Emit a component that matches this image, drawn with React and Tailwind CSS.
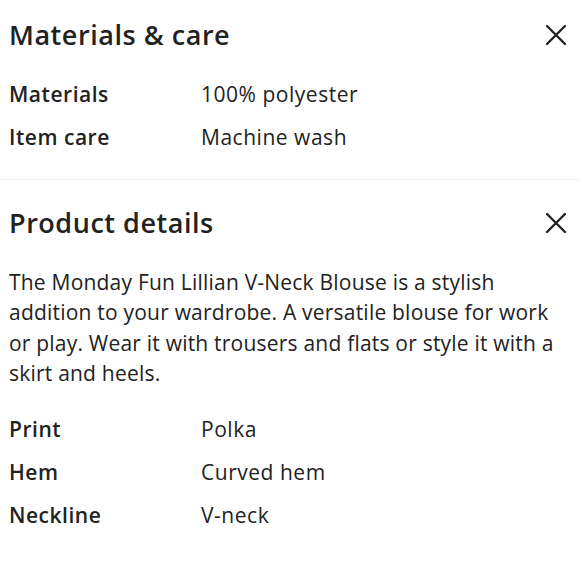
const materials = [
  ["Materials", "100% polyester"],
  ["Item care", "Machine wash"],
];

const details = [
  ["Print", "Polka"],
  ["Hem", "Curved hem"],
  ["Neckline", "V-neck"],
];

function CloseIcon() {
  return (
    <svg width="22" height="22" viewBox="0 0 22 22" fill="none" stroke="currentColor" strokeWidth="2.4" strokeLinecap="round">
      <path d="M2 2L20 20M20 2L2 20" />
    </svg>
  );
}

function SpecRow({ label, value }) {
  return (
    <div className="flex h-[43px] items-center text-[21px] tracking-[0.025em]">
      <span className="w-[192px] font-semibold">{label}</span>
      <span>{value}</span>
    </div>
  );
}

function SectionHeader({ title }) {
  return (
    <div className="flex h-[32px] items-center justify-between">
      <h2 className="text-[27px] font-semibold tracking-[0.02em]">{title}</h2>
      <button className="mr-[4px] text-[#222]">
        <CloseIcon />
      </button>
    </div>
  );
}

export default function App() {
  return (
    <div
      className="w-[580px] h-[580px] bg-white text-[#222] overflow-hidden"
      style={{ fontFamily: "'Open Sans', 'Noto Sans', sans-serif" }}
    >
      <section className="px-[9px] pt-[19px] pb-[20px]">
        <SectionHeader title="Materials & care" />
        <div className="mt-[22px]">
          {materials.map(([l, v]) => (
            <SpecRow key={l} label={l} value={v} />
          ))}
        </div>
      </section>

      <div className="h-px bg-[#ececec]" />

      <section className="px-[9px] pt-[27px]">
        <SectionHeader title="Product details" />
        <p className="mt-[28px] pr-[6px] text-[21px] tracking-[0.01em] leading-[30.3px]">
          The Monday Fun Lillian V-Neck Blouse is a stylish addition to your wardrobe. A versatile blouse for work or play. Wear it with trousers and flats or style it with a skirt and heels.
        </p>
        <div className="mt-[20px]">
          {details.map(([l, v]) => (
            <SpecRow key={l} label={l} value={v} />
          ))}
        </div>
      </section>
    </div>
  );
}
